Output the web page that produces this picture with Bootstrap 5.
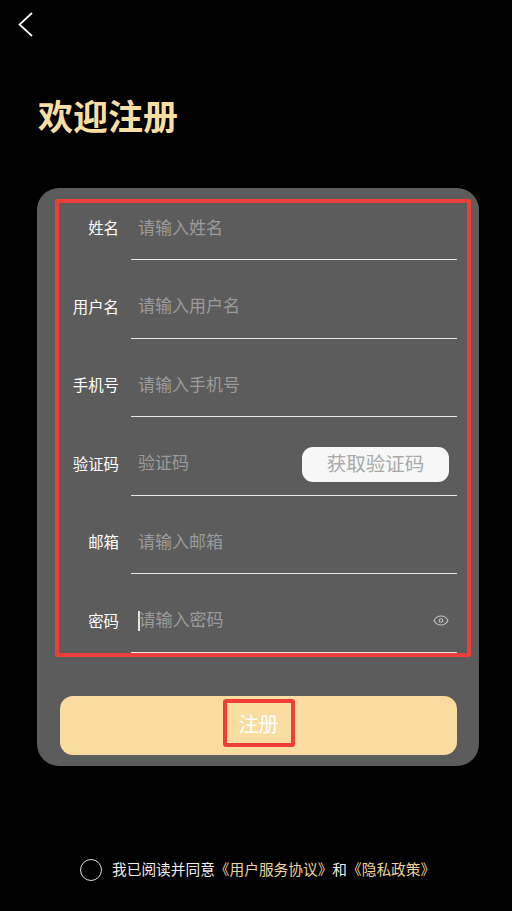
<!DOCTYPE html>
<html lang="zh">
<head>
<meta charset="utf-8">
<title>欢迎注册</title>
<link href="https://cdn.jsdelivr.net/npm/bootstrap@5.3.0/dist/css/bootstrap.min.css" rel="stylesheet">
<style>
html,body{height:911px;overflow:hidden}
body{background:#000;font-family:"Liberation Sans","Noto Sans CJK SC",sans-serif}
.page-wrap{height:911px;position:relative}
.back-btn{height:50px;padding:12px 0 0 18px}
.back-btn svg{display:block}
.reg-title{margin:45px 0 0 38px;height:45px;font-size:35px;line-height:45px;font-weight:700;color:#f9dea3}
.reg-panel{margin:48px 33px 0 37px;height:578px;background:#5c5c5c;border-radius:22px;padding:11px 8px 11px 18px}
.field-box{height:458px;border:4px solid #ee3e3a;border-radius:2px;padding-right:10px}
.field-row{height:78.6px}
.field-row:first-child{height:57px}
.field-label{width:60px;text-align:right;color:#fff;font-size:15.4px;line-height:24px;padding-bottom:19px}
.field-main{margin-left:11.5px;border-bottom:1px solid #e8e8e8;height:100%;padding:0 0 18.5px 7.5px;color:#9b9b9b;font-size:17px;line-height:24px}
.caret-bar{width:1.5px;height:20px;background:#e6e6e6;margin:0 -1px 2px 0;flex:none}
.code-btn{width:147px;height:35px;background:#f7f7f7;color:#a9a9a9;border:0;border-radius:11px;font-size:19.5px;line-height:35px;padding:0;margin:0 8px -5.5px 0;text-align:center}
.eye-icon{margin:0 8px 6px 0;flex:none}
.submit-bar{margin:39px 0 0 5px;width:397px;height:59px;background:#f9dca0;border-radius:13px;color:#fff;font-size:20px}
.submit-mark{width:72px;height:48px;border:4px solid #ee3e3a;border-radius:3px;margin-top:-5px;padding-top:3px}
.agree-line{position:absolute;left:80px;top:859px;color:#eee;font-size:14.7px;line-height:22px;white-space:nowrap}
.agree-ring{width:22px;height:22px;border:1.5px solid #ddd;border-radius:50%;margin-right:10px;flex:none}
.agree-link{color:#ecd3a0}
</style>
</head>
<body>
<div class="page-wrap">
  <div class="back-btn">
    <svg width="16" height="26" viewBox="0 0 16 26" fill="none" stroke="#fff" stroke-width="1.7"><path d="M14 1 L1.5 12.5 L14 24"/></svg>
  </div>
  <div class="reg-title">欢迎注册</div>
  <div class="reg-panel">
    <div class="field-box">
      <div class="field-row d-flex align-items-end"><div class="field-label">姓名</div><div class="field-main flex-grow-1 d-flex align-items-end">请输入姓名</div></div>
      <div class="field-row d-flex align-items-end"><div class="field-label">用户名</div><div class="field-main flex-grow-1 d-flex align-items-end">请输入用户名</div></div>
      <div class="field-row d-flex align-items-end"><div class="field-label">手机号</div><div class="field-main flex-grow-1 d-flex align-items-end">请输入手机号</div></div>
      <div class="field-row d-flex align-items-end"><div class="field-label">验证码</div><div class="field-main flex-grow-1 d-flex align-items-end justify-content-between"><span>验证码</span><button class="code-btn" type="button">获取验证码</button></div></div>
      <div class="field-row d-flex align-items-end"><div class="field-label">邮箱</div><div class="field-main flex-grow-1 d-flex align-items-end">请输入邮箱</div></div>
      <div class="field-row d-flex align-items-end"><div class="field-label">密码</div><div class="field-main flex-grow-1 d-flex align-items-end"><span class="caret-bar"></span><span class="flex-grow-1">请输入密码</span>
        <svg class="eye-icon" width="16" height="13" viewBox="0 0 16 13" fill="none" stroke="#c4c4c4" stroke-width="1.1"><path d="M1 6.5 C4 .5 12 .5 15 6.5 C12 12.5 4 12.5 1 6.5Z"/><circle cx="8" cy="6.5" r="1.8"/></svg>
      </div></div>
    </div>
    <div class="submit-bar d-flex justify-content-center align-items-center">
      <span class="submit-mark d-flex justify-content-center align-items-center">注册</span>
    </div>
  </div>
  <div class="agree-line d-flex align-items-center">
    <span class="agree-ring"></span>
    <span>我已阅读并同意<span class="agree-link">《用户服务协议》</span>和<span class="agree-link">《隐私政策》</span></span>
  </div>
</div>
<script src="https://cdn.jsdelivr.net/npm/bootstrap@5.3.0/dist/js/bootstrap.bundle.min.js"></script>
</body>
</html>
